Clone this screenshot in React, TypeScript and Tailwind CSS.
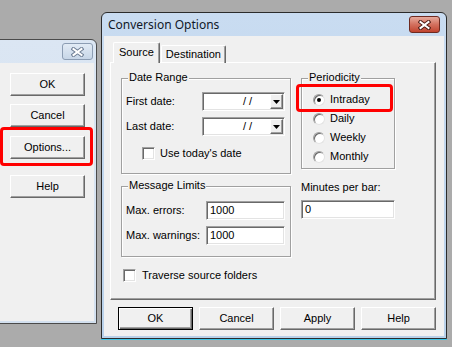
const raised =
  "bg-[#f0f0f0] border border-t-white border-l-white border-r-[#696969] border-b-[#696969] shadow-[inset_-1px_-1px_0_#a0a0a0]";
const sunken =
  "bg-white border border-t-[#a0a0a0] border-l-[#a0a0a0] border-r-white border-b-white shadow-[inset_1px_1px_0_#696969,inset_-1px_-1px_0_#e3e3e3]";

const CloseX = ({ active }: { active: boolean }) => (
  <div
    className={
      "w-[31px] h-[17px] rounded-[3px] border flex items-center justify-center " +
      (active
        ? "border-[#6e2a20] bg-gradient-to-b from-[#e5aa9d] via-[#d3705e] to-[#c1432e]"
        : "border-[#8c9db3] bg-gradient-to-b from-[#e2ebf5] to-[#c7d6e7]")
    }
  >
    <svg width="13" height="10" viewBox="0 0 13 10">
      <path d="M2.5 2 L10.5 8 M10.5 2 L2.5 8" stroke={active ? "#4a1a14" : "#6f7f95"} strokeWidth="4" strokeLinecap="square" />
      <path d="M2.5 2 L10.5 8 M10.5 2 L2.5 8" stroke="#ffffff" strokeWidth="2" strokeLinecap="square" />
    </svg>
  </div>
);

const Btn = ({ label, def }: { label: string; def?: boolean }) => (
  <button
    className={
      "w-[75px] h-[23px] flex items-center justify-center bg-[#f0f0f0] " +
      (def
        ? "border border-black shadow-[inset_1px_1px_0_white,inset_-1px_-1px_0_#696969,inset_-2px_-2px_0_#a0a0a0]"
        : raised)
    }
  >
    {label}
  </button>
);

const Group = ({ title, className, children }: { title: string; className: string; children: React.ReactNode }) => (
  <div className={"relative border border-[#a0a0a0] shadow-[inset_1px_1px_0_white,1px_1px_0_white] " + className}>
    <span className="absolute -top-[8px] left-[6px] px-[1px] bg-[#f0f0f0] leading-[13px]">{title}</span>
    {children}
  </div>
);

const CheckBox = () => <div className={"w-[13px] h-[13px] shrink-0 " + sunken} />;

const Radio = ({ label, on }: { label: string; on?: boolean }) => (
  <div className="h-[19px] flex items-center gap-[5px]">
    <div className="w-[12px] h-[12px] rounded-full bg-white border border-t-[#a0a0a0] border-l-[#a0a0a0] border-r-[#e3e3e3] border-b-[#e3e3e3] shadow-[inset_1px_1px_0_#696969] flex items-center justify-center">
      {on && <div className="w-[4px] h-[4px] rounded-full bg-black" />}
    </div>
    <span>{label}</span>
  </div>
);

const DateField = () => (
  <div className={"w-[83px] h-[19px] flex items-center " + sunken}>
    <span className="ml-[40px]">/ /</span>
    <div className={"ml-auto mr-[1px] w-[13px] h-[15px] flex items-center justify-center " + raised}>
      <svg width="7" height="4" viewBox="0 0 7 4">
        <path d="M0 0 H7 L3.5 4 Z" fill="#000" />
      </svg>
    </div>
  </div>
);

const TextField = ({ value, w }: { value: string; w: string }) => (
  <div className={"h-[19px] flex items-center pl-[3px] " + w + " " + sunken}>{value}</div>
);

export default function App() {
  return (
    <div className="relative w-[452px] h-[347px] overflow-hidden bg-[#ababab] text-black font-['Liberation_Sans',Arial,sans-serif] text-[11px] leading-[13px]">
      {/* back window */}
      <div className="absolute left-[-20px] top-[39px] w-[117px] h-[285px] rounded-tr-[6px] border border-[#4a4a4a] bg-gradient-to-b from-[#dbe6f3] to-[#d3e0ef] flex flex-col">
        <div className="h-[23px] shrink-0 flex items-center justify-end pr-[3px]">
          <CloseX active={false} />
        </div>
        <div className="flex-1 mx-[2px] mb-[2px] bg-[#f0f0f0] flex flex-col pl-[27px] pt-[10px]">
          <Btn label="OK" />
          <div className="mt-[8px]"><Btn label="Cancel" /></div>
          <div className="mt-[9px]"><Btn label="Options..." /></div>
          <div className="mt-[16px]"><Btn label="Help" /></div>
        </div>
      </div>

      {/* Conversion Options window */}
      <div className="absolute left-[101px] top-[12px] w-[346px] h-[327px] rounded-t-[6px] border border-[#2b2b2b] bg-gradient-to-b from-[#c9dcf1] to-[#b9d1ea] shadow-[0_1px_0_#3cc6e8] flex flex-col">
        <div className="h-[23px] shrink-0 flex items-center justify-between pl-[6px] pr-[6px]">
          <span className="font-['Noto_Sans',sans-serif] text-[12px] text-[#101828]">Conversion Options</span>
          <CloseX active />
        </div>
        <div className="flex-1 mx-[2px] mb-[2px] bg-[#f0f0f0] flex flex-col pt-[7px]">
          {/* tabs */}
          <div className="flex items-end h-[20px] pl-[9px] relative z-10">
            <div className="h-[21px] px-[5px] pt-[3px] bg-[#f0f0f0] border border-b-0 border-t-white border-l-white border-r-[#696969] rounded-t-[2px] shadow-[inset_-1px_0_0_#a0a0a0]">
              Source
            </div>
            <div className="h-[18px] ml-[1px] px-[4px] pt-[2px] border border-b-0 border-t-white border-l-white border-r-[#696969] rounded-t-[2px] shadow-[inset_-1px_0_0_#a0a0a0]">
              Destination
            </div>
          </div>
          <div className="ml-[6px] w-[326px] h-[238px] -mt-[1px] border border-t-white border-l-white border-r-[#696969] border-b-[#696969] shadow-[inset_-1px_-1px_0_#a0a0a0] pl-[10px] pt-[15px] flex flex-col">
            <div className="flex gap-[10px]">
              <div className="w-[170px] flex flex-col">
                <Group title="Date Range" className="h-[96px] pt-[13px] pl-[4px] pr-[5px]">
                  <div className="flex items-center justify-between">
                    <span>First date:</span>
                    <DateField />
                  </div>
                  <div className="flex items-center justify-between mt-[6px]">
                    <span>Last date:</span>
                    <DateField />
                  </div>
                  <div className="flex items-center gap-[5px] mt-[11px] pl-[16px]">
                    <CheckBox />
                    <span>Use today's date</span>
                  </div>
                </Group>
                <Group title="Message Limits" className="mt-[12px] h-[71px] pt-[14px] pl-[4px] pr-[5px]">
                  <div className="flex items-center justify-between">
                    <span>Max. errors:</span>
                    <TextField value="1000" w="w-[79px]" />
                  </div>
                  <div className="flex items-center justify-between mt-[6px]">
                    <span>Max. warnings:</span>
                    <TextField value="1000" w="w-[79px]" />
                  </div>
                </Group>
              </div>
              <div className="w-[94px] flex flex-col">
                <Group title="Periodicity" className="h-[91px] pt-[11px] pl-[11px]">
                  <Radio label="Intraday" on />
                  <Radio label="Daily" />
                  <Radio label="Weekly" />
                  <Radio label="Monthly" />
                </Group>
                <span className="mt-[12px]">Minutes per bar:</span>
                <div className="mt-[6px]">
                  <TextField value="0" w="w-[94px]" />
                </div>
              </div>
            </div>
            <div className="flex items-center gap-[6px] mt-[12px] pl-[2px]">
              <CheckBox />
              <span>Traverse source folders</span>
            </div>
          </div>
          <div className="flex gap-[6px] pl-[14px] mt-[7px]">
            <Btn label="OK" def />
            <Btn label="Cancel" />
            <Btn label="Apply" />
            <Btn label="Help" />
          </div>
        </div>
      </div>

      {/* red highlight marks */}
      <div className="absolute left-0 top-[127px] w-[93px] h-[39px] border-[3px] border-[#ff0000] rounded-[4px]" />
      <div className="absolute left-[296px] top-[84px] w-[97px] h-[28px] border-[3px] border-[#ff0000] rounded-[4px]" />
    </div>
  );
}
